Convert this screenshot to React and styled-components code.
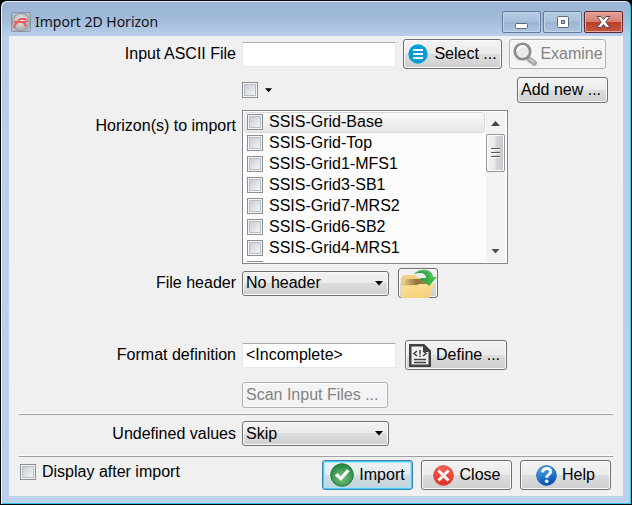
import React, { useState } from "react";
import styled, { createGlobalStyle, css } from "styled-components";

const GlobalStyle = createGlobalStyle`
  * { box-sizing: border-box; }
  body { margin: 0; background: #000; }
  button, input, select { font: inherit; color: inherit; margin: 0; }
`;

const Frame = styled.div`
  display: flex;
  flex-direction: column;
  min-height: 100vh;
  padding: 0 7px 8px;
  border: 1px solid #08090c;
  border-radius: 7px 7px 0 0;
  background: linear-gradient(#98b3d3 0, #a2bbd9 18px, #b8cee9 35px, #bad0eb 100%);
  box-shadow: inset 1px 1px 0 #e3effa, inset -1px -1px 0 #35c5e2;
  font: 16px/20px "Liberation Sans", Arial, sans-serif;
  color: #000;
`;

const TitleBar = styled.header`
  display: flex;
  align-items: flex-start;
  height: 35px;
  padding: 10px 1px 0 3px;
`;

const Title = styled.h1`
  flex: 1;
  margin: 1px 0 0 4px;
  font: 14px/20px "Noto Sans", sans-serif;
  color: #101418;
`;

const WindowControls = styled.div`
  display: flex;
  gap: 2px;
`;

const WindowButton = styled.button`
  display: grid;
  place-items: center;
  width: 39px;
  height: 22px;
  padding: 0;
  border: 1px solid ${(p) => (p.$danger ? "#5a2632" : "#637b9a")};
  border-radius: 2px;
  background: ${(p) =>
    p.$danger
      ? "linear-gradient(#e3a498 0, #d58070 48%, #bb3f27 50%, #c4553f 100%)"
      : "linear-gradient(#b5cae2 0, #a9c0dc 48%, #9ab3d0 50%, #afc6e1 100%)"};
  box-shadow: inset 0 0 0 1px ${(p) => (p.$danger ? "#e5aba0" : "#c3d5e9")};
`;

const Content = styled.main`
  flex: 1;
  margin-left: 1px;
  margin-right: 1px;
  padding: 3px 10px 6px 11px;
  background: #f0f0f0;
`;

const FormRow = styled.div`
  display: grid;
  grid-template-columns: 216px minmax(0, 1fr);
  column-gap: 6px;
  align-items: ${(p) => (p.$top ? "start" : "center")};
  margin-top: ${(p) => p.$gap || 0}px;
`;

const Label = styled.label`
  grid-column: 1;
  padding-top: ${(p) => (p.$drop ? 6 : 0)}px;
  text-align: right;
  white-space: nowrap;
`;

const Fields = styled.div`
  grid-column: 2;
  display: flex;
  align-items: center;
  gap: ${(p) => p.$gap || 8}px;
`;

const TextInput = styled.input`
  width: 154px;
  height: 25px;
  padding: 0 3px;
  border: 1px solid #e3e9ef;
  border-top-color: #abadb3;
  border-radius: 1px;
  background: #fff;
`;

const raised = css`
  border: 1px solid #707070;
  border-radius: 3px;
  background: linear-gradient(#f3f3f3 0, #ebebeb 49%, #dddddd 50%, #cfcfcf 100%);
  box-shadow: inset 0 0 0 1px #fafafa;
`;

const Button = styled.button`
  ${raised}
  display: inline-flex;
  align-items: center;
  justify-content: ${(p) => (p.$start ? "flex-start" : "center")};
  gap: ${(p) => p.$gap || 5}px;
  width: ${(p) => p.$width}px;
  height: ${(p) => (p.$short ? 26 : 30)}px;
  padding: 0 0 0 ${(p) => (p.$start ? 3 : 0)}px;
  white-space: nowrap;
  svg { flex: none; }
  &:disabled {
    color: #838383;
    border-color: #adb2b5;
    background: #f4f4f4;
  }
  ${(p) =>
    p.$primary &&
    css`
      border-color: #3c7fb1;
      background: linear-gradient(#eef3f5 0, #e3ebef 49%, #d1dde4 50%, #c3d2da 100%);
      box-shadow: inset 0 0 0 1px #48d0f3, inset 0 0 0 2px #a5e5f6;
    `}
`;

const PushRight = styled.div`
  margin-left: auto;
  padding-right: 5px;
  display: flex;
`;

const Check = styled.input.attrs({ type: "checkbox" })`
  appearance: none;
  flex: none;
  display: grid;
  width: 16px;
  height: 16px;
  border: 1px solid #8e8f8f;
  background: linear-gradient(135deg, #c9cdd5, #f4f5f6) content-box, #f4f4f4;
  padding: 2px;
  box-shadow: inset 0 0 0 1px #f4f4f4, inset 0 0 0 2px #b9bec6;
  &:checked::after {
    content: "✓";
    font: bold 13px/10px "DejaVu Sans", sans-serif;
    color: #24497a;
  }
`;

const MenuButton = styled.button`
  display: flex;
  padding: 4px 0;
  border: 0;
  background: none;
`;

const ListBox = styled.div`
  display: flex;
  width: 266px;
  height: 154px;
  padding: 1px 2px 1px 1px;
  border: 1px solid #828790;
  background: #fcfcfc;
`;

const Items = styled.ul`
  flex: 1;
  margin: 0;
  padding: 0;
  overflow: hidden;
  list-style: none;
`;

const Item = styled.li`
  height: 21px;
  border: 1px solid ${(p) => (p.$current ? "#d9d9d9" : "transparent")};
  border-radius: 3px;
  background: ${(p) => (p.$current ? "linear-gradient(#fafafa, #e6e6e6)" : "none")};
`;

const ItemLabel = styled.label`
  display: flex;
  align-items: center;
  gap: 6px;
  height: 18px;
  padding-left: 2px;
`;

const ScrollTrack = styled.div`
  display: flex;
  flex-direction: column;
  width: 19px;
  margin-left: 1px;
  background: #f2f2f2;
`;

const ScrollArrow = styled.button`
  display: grid;
  place-items: center;
  height: 22px;
  padding: 0;
  border: 0;
  background: none;
`;

const ScrollThumb = styled.div`
  display: grid;
  place-items: center;
  height: 38px;
  border: 1px solid #979797;
  border-radius: 2px;
  background: linear-gradient(90deg, #f4f4f4 0, #e8e8e9 48%, #d5d6d9 52%, #c6c7ca 100%);
  box-shadow: inset 0 0 0 1px #fafafa;
`;

const ScrollSpace = styled.div`
  flex: 1;
`;

const SelectShell = styled.div`
  display: grid;
  width: 147px;
  align-items: center;
  svg {
    grid-area: 1 / 1;
    justify-self: end;
    margin-right: 6px;
    pointer-events: none;
  }
`;

const SelectBox = styled.select`
  ${raised}
  grid-area: 1 / 1;
  appearance: none;
  width: 100%;
  height: 25px;
  padding: 0 20px 0 3px;
`;

const Divider = styled.hr`
  height: 2px;
  margin: ${(p) => p.$gap}px 0 0;
  border: 0;
  border-top: 1px solid #fbfbfb;
  border-bottom: 1px solid #a0a0a0;
  margin-left: -1px;
`;

const Footer = styled.footer`
  display: flex;
  align-items: center;
  gap: 8px;
  padding-right: 2px;
  margin-top: 3px;
`;

const FooterCheck = styled.label`
  display: flex;
  align-items: center;
  gap: 6px;
  margin-right: auto;
  padding-bottom: 6px;
`;

const Down = ({ w = 8, fill = "#000" }) => (
  <svg width={w} height="5" viewBox="0 0 8 5" aria-hidden="true">
    <path d="M0 0h8L4 4.6z" fill={fill} />
  </svg>
);

const AppIcon = () => (
  <svg width="20" height="21" viewBox="0 0 20 21" aria-hidden="true">
    <defs>
      <radialGradient id="app" cx=".5" cy=".4">
        <stop offset="0" stopColor="#efefef" />
        <stop offset="1" stopColor="#b4b4b4" />
      </radialGradient>
    </defs>
    <rect x=".5" y="1.5" width="19" height="19" rx="1" fill="#b1bbc5" stroke="#8797aa" />
    <circle cx="10" cy="11" r="8.700" fill="url(#app)" stroke="#959595" />
    <path d="M3 10l3-1 3-2 5 0 3 2v2l-3 0 2 4-2 1-2-4-5 0-2 2-1 3-2 0 2-5-1-1z" fill="#ee5c5f" />
    <path d="M3 9.500h5M13 9.500h3" stroke="#f0a5a5" />
    <path d="M9 9.500h4" stroke="#fbe0e0" />
  </svg>
);

const SelectIcon = () => (
  <svg width="20" height="20" viewBox="0 0 20 20" aria-hidden="true">
    <circle cx="10" cy="10" r="9.7" fill="#079dd7" />
    <path d="M5 6h10M5 10h10M5 14h10" stroke="#fff" strokeWidth="2.2" />
  </svg>
);

const ExamineIcon = () => (
  <svg width="25" height="24" viewBox="0 0 25 24" aria-hidden="true">
    <path d="M15.5 15.5l3 2" stroke="#777" strokeWidth="3" />
    <path d="M17.5 17.5l4.7 3.5" stroke="#aaa" strokeWidth="5.5" strokeLinecap="round" />
    <path d="M17.5 17l4.5 3" stroke="#d7d7d7" strokeWidth="1.5" strokeLinecap="round" />
    <circle cx="10.5" cy="9.5" r="7.7" fill="#e9e9e9" stroke="#8c8c8c" strokeWidth="2.7" />
    <path d="M5.5 9a5 5 0 018-4" fill="none" stroke="#fff" strokeWidth="2" />
  </svg>
);

const FolderIcon = () => (
  <svg width="37" height="29" viewBox="0 0 37 29" aria-hidden="true">
    <defs>
      <linearGradient id="folder" x2=".5" y2="1">
        <stop stopColor="#ffe497" />
        <stop offset="1" stopColor="#f3d07c" />
      </linearGradient>
      <linearGradient id="arrow" x2="1">
        <stop stopColor="#168f43" />
        <stop offset="1" stopColor="#51c54a" />
      </linearGradient>
      <linearGradient id="inside" x2="1">
        <stop stopColor="#e6c884" />
        <stop offset=".5" stopColor="#8b7038" />
        <stop offset="1" stopColor="#a8914e" />
      </linearGradient>
    </defs>
    <path d="M1 29V9l3-3h11l3 3h14v12z" fill="#efd084" />
    <path d="M4 10h26v6H4z" fill="url(#inside)" />
    <path d="M1 29V17h14l4-2h15l-5 14z" fill="url(#folder)" />
    <path d="M14 5C20-2 33 0 33 8h4l-8 9-9-8h6c0-5-5-6-12-4z" fill="url(#arrow)" />
    <path d="M16 4c7-5 15-2 16 5" fill="none" stroke="#63c96b" />
  </svg>
);

const DefineIcon = () => (
  <svg width="22" height="23" viewBox="0 0 22 23" aria-hidden="true">
    <path d="M0 0h15l7 7v16H0z" fill="#414141" />
    <path d="M2.5 2.5H14V8h5.5v12.5h-17z" fill="#f0f0f0" />
    <path d="M15 0l7 7h-7z" fill="#414141" />
    <path d="M8 7L5 9.5 8 12M14 7l3 2.5-3 2.5M11 6v4.5M11 11.5V13M5 15.5h12M5 18.5h12" fill="none" stroke="#414141" strokeWidth="1.5" />
  </svg>
);

const ImportIcon = () => (
  <svg width="24" height="24" viewBox="0 0 24 24" aria-hidden="true">
    <defs>
      <radialGradient id="ok" cx=".5" cy=".62" r=".55">
        <stop stopColor="#83c37f" />
        <stop offset="1" stopColor="#278b46" />
      </radialGradient>
    </defs>
    <circle cx="12" cy="12" r="11.3" fill="url(#ok)" stroke="#207d3d" />
    <path d="M5 12.5l2.5-2.3 3.2 3.5 6.4-7.5 2.3 2-8.5 9.4z" fill="#fff" stroke="#e0f0df" strokeWidth=".5" />
  </svg>
);

const CloseIcon = () => (
  <svg width="21" height="21" viewBox="0 0 21 21" aria-hidden="true">
    <defs>
      <linearGradient id="close" x2="0" y2="1">
        <stop stopColor="#f26452" />
        <stop offset="1" stopColor="#e62e25" />
      </linearGradient>
    </defs>
    <circle cx="10.5" cy="10.5" r="9.8" fill="url(#close)" stroke="#d64438" />
    <path d="M6.5 6.5l8 8m0-8l-8 8" stroke="#fff" strokeWidth="3" strokeLinecap="square" />
    <path d="M8.5 8.5l4 4m0-4l-4 4" stroke="#f6d6d2" />
  </svg>
);

const HelpIcon = () => (
  <svg width="21" height="21" viewBox="0 0 21 21" aria-hidden="true">
    <defs>
      <linearGradient id="help" x2=".3" y2="1">
        <stop stopColor="#70b5ed" />
        <stop offset=".5" stopColor="#2f82d7" />
        <stop offset="1" stopColor="#0453b2" />
      </linearGradient>
    </defs>
    <circle cx="10.5" cy="10.5" r="9.8" fill="url(#help)" stroke="#1762b7" />
    <path d="M6.6 7.400c.2-5.500 8.500-5 8-.5-.3 2.900-3.900 2.700-3.900 5.800" fill="none" stroke="#fff" strokeWidth="3" />
    <circle cx="10.700" cy="16.200" r="1.800" fill="#fff" />
  </svg>
);

const horizons = [
  "SSIS-Grid-Base",
  "SSIS-Grid-Top",
  "SSIS-Grid1-MFS1",
  "SSIS-Grid3-SB1",
  "SSIS-Grid7-MRS2",
  "SSIS-Grid6-SB2",
  "SSIS-Grid4-MRS1",
  "",
];

function DropDown({ id, options }) {
  return (
    <SelectShell>
      <SelectBox id={id}>
        {options.map((o) => (
          <option key={o}>{o}</option>
        ))}
      </SelectBox>
      <Down />
    </SelectShell>
  );
}

export default function App() {
  const [file, setFile] = useState("");
  const [format, setFormat] = useState("<Incomplete>");
  return (
    <Frame>
      <GlobalStyle />
      <TitleBar>
        <AppIcon />
        <Title>Import 2D Horizon</Title>
        <WindowControls>
          <WindowButton aria-label="Minimize">
            <svg width="15" height="18" viewBox="0 0 15 18">
              <rect x="1.5" y="10.5" width="12" height="5" rx="1" fill="#fff" stroke="#5b677b" />
            </svg>
          </WindowButton>
          <WindowButton aria-label="Maximize">
            <svg width="14" height="14" viewBox="0 0 14 14">
              <rect x="1.5" y="1.5" width="11" height="11" rx="1" fill="#fff" stroke="#5b677b" />
              <rect x="5.5" y="5.5" width="3" height="3" fill="#a0b7d0" stroke="#5b677b" />
            </svg>
          </WindowButton>
          <WindowButton $danger aria-label="Close window">
            <svg width="15" height="14" viewBox="0 0 15 14">
              <path d="M1 1.5h4L7.500 4.500 10 1.500h4L9.800 7l4.200 5.500h-4L7.500 9.500 5 12.500H1L5.200 7z" fill="#fff" stroke="#65434d" />
            </svg>
          </WindowButton>
        </WindowControls>
      </TitleBar>
      <Content>
        <FormRow>
          <Label htmlFor="file">Input ASCII File</Label>
          <Fields $gap={7}>
            <TextInput id="file" value={file} onChange={(e) => setFile(e.target.value)} />
            <Button $width={99} $gap={6}><SelectIcon />Select ...</Button>
            <Button $width={97} $gap={3} disabled><ExamineIcon />Examine</Button>
          </Fields>
        </FormRow>
        <FormRow $gap={8}>
          <Fields $gap={7}>
            <Check aria-label="Select all horizons" />
            <MenuButton aria-label="Selection menu"><Down w={7} /></MenuButton>
            <PushRight><Button $width={91} $short $start>Add new ...</Button></PushRight>
          </Fields>
        </FormRow>
        <FormRow $gap={7} $top>
          <Label as="span" id="horizons" $drop>Horizon(s) to import</Label>
          <ListBox role="group" aria-labelledby="horizons">
            <Items>
              {horizons.map((name, i) => (
                <Item key={i} $current={i === 0}>
                  <ItemLabel><Check aria-label={name || "Next horizon"} />{name}</ItemLabel>
                </Item>
              ))}
            </Items>
            <ScrollTrack>
              <ScrollArrow aria-label="Scroll up">
                <svg width="9" height="5" viewBox="0 0 9 5"><path d="M0 5h9L4.500 0z" fill="#444" /></svg>
              </ScrollArrow>
              <ScrollThumb>
                <svg width="9" height="12" viewBox="0 0 9 12">
                  <path d="M0 1.500h9M0 5.500h9M0 9.500h9" stroke="#555" />
                  <path d="M0 2.500h9M0 6.500h9M0 10.500h9" stroke="#fff" />
                </svg>
              </ScrollThumb>
              <ScrollSpace />
              <ScrollArrow aria-label="Scroll down"><Down w={9} fill="#505050" /></ScrollArrow>
            </ScrollTrack>
          </ListBox>
        </FormRow>
        <FormRow $gap={4}>
          <Label htmlFor="header">File header</Label>
          <Fields $gap={9}>
            <DropDown id="header" options={["No header", "Fixed size", "Variable size"]} />
            <Button $width={40} aria-label="Open header file"><FolderIcon /></Button>
          </Fields>
        </FormRow>
        <FormRow $gap={42}>
          <Label htmlFor="format">Format definition</Label>
          <Fields $gap={9}>
            <TextInput id="format" value={format} onChange={(e) => setFormat(e.target.value)} />
            <Button $width={102} $start><DefineIcon />Define ...</Button>
          </Fields>
        </FormRow>
        <FormRow $gap={12}>
          <Fields><Button $width={146} $short $start disabled>Scan Input Files ...</Button></Fields>
        </FormRow>
        <Divider $gap={5} />
        <FormRow $gap={6}>
          <Label htmlFor="undef">Undefined values</Label>
          <Fields><DropDown id="undef" options={["Skip", "Pass", "Interpolate"]} /></Fields>
        </FormRow>
        <Divider $gap={9} />
        <Footer>
          <FooterCheck><Check />Display after import</FooterCheck>
          <Button $width={91} $primary><ImportIcon />Import</Button>
          <Button $width={91} $gap={6}><CloseIcon />Close</Button>
          <Button $width={91}><HelpIcon />Help</Button>
        </Footer>
      </Content>
    </Frame>
  );
}
